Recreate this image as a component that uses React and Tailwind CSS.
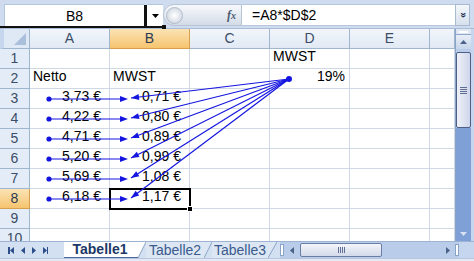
import React from "react";

const COLS = [
  { k: "A", w: 80 },
  { k: "B", w: 80 },
  { k: "C", w: 80 },
  { k: "D", w: 80 },
  { k: "E", w: 80 },
  { k: "", w: 25 },
];

const A = ["3,73 €", "4,22 €", "4,71 €", "5,20 €", "5,69 €", "6,18 €"];
const B = ["0,71 €", "0,80 €", "0,89 €", "0,99 €", "1,08 €", "1,17 €"];

function cellContent(r, c) {
  if (r === 1 && c === "D") return { t: "MWST", a: "l" };
  if (r === 2 && c === "A") return { t: "Netto", a: "l" };
  if (r === 2 && c === "B") return { t: "MWST", a: "l" };
  if (r === 2 && c === "D") return { t: "19%", a: "r" };
  if (r >= 3 && r <= 8 && c === "A") return { t: A[r - 3], a: "e" };
  if (r >= 3 && r <= 8 && c === "B") return { t: B[r - 3], a: "e" };
  return null;
}

function Arrows() {
  const blue = "#1515e0";
  const ys = [99, 119, 139, 159, 179, 199];
  const head = (x1, y1, x2, y2) => {
    const dx = x2 - x1;
    const dy = y2 - y1;
    const len = Math.hypot(dx, dy);
    const ux = dx / len;
    const uy = dy / len;
    const L = 8;
    const W = 3;
    const bx = x2 - ux * L;
    const by = y2 - uy * L;
    return `${x2},${y2} ${bx - uy * W},${by + ux * W} ${bx + uy * W},${by - ux * W}`;
  };
  return (
    <svg
      className="absolute left-0 top-0 pointer-events-none"
      width="474"
      height="261"
      viewBox="0 0 474 261"
    >
      {ys.map((y) => (
        <g key={"a" + y}>
          <circle cx="49" cy={y} r="2.6" fill={blue} />
          <line x1="49" y1={y} x2="121" y2={y} stroke={blue} strokeWidth="1.2" />
          <polygon points={head(49, y, 128, y)} fill={blue} />
        </g>
      ))}
      {ys.map((y) => (
        <g key={"d" + y}>
          <line x1="289" y1="79" x2={131} y2={y - 1} stroke={blue} strokeWidth="1.2" />
          <polygon points={head(289, 79, 131, y - 1)} fill={blue} />
        </g>
      ))}
      <circle cx="289" cy="79" r="3" fill={blue} />
    </svg>
  );
}

function Tri({ dir = "down", className = "" }) {
  const pts = {
    down: "0,0 7,0 3.5,4",
    up: "0,4 7,4 3.5,0",
    left: "4,0 4,7 0,3.5",
    right: "0,0 0,7 4,3.5",
  }[dir];
  const vb = dir === "down" || dir === "up" ? "0 0 7 4" : "0 0 4 7";
  const w = dir === "down" || dir === "up" ? 7 : 4;
  const h = dir === "down" || dir === "up" ? 4 : 7;
  return (
    <svg width={w} height={h} viewBox={vb} className={className}>
      <polygon points={pts} fill="currentColor" />
    </svg>
  );
}

export default function App() {
  const rows = [1, 2, 3, 4, 5, 6, 7, 8, 9, 10];
  return (
    <div className="relative w-[474px] h-[261px] overflow-hidden bg-[#c5d6ee] font-['Liberation_Sans',Arial,sans-serif] text-[13px] text-black flex flex-col">
      {/* Formula bar */}
      <div className="relative h-[29px] shrink-0 flex items-start pt-[4px] pl-[4px] bg-[#cfdcef] border-b border-[#a8bcd8]">
        <div className="w-[140px] h-[22px] bg-white border-t border-l border-[#b6c6dc] flex items-center justify-center text-[14px] pt-[1px]">
          B8
        </div>
        <div className="w-[3px] h-[21px] bg-[#111] mt-[1px]" />
        <div className="w-[16px] h-[22px] bg-white border-t border-[#b6c6dc] flex items-center justify-center text-black">
          <Tri dir="down" />
        </div>
        <div className="w-[79px] h-[22px] rounded-l-[11px] bg-linear-to-b from-[#f6f8fb] via-[#e6ebf2] to-[#d3dbe6] border border-[#b7c4d6] flex items-center justify-between pl-[2px] pr-[5px]">
          <div className="w-[17px] h-[17px] rounded-full bg-radial from-[#ffffff] to-[#c7d0dc] border border-[#b0bccc]" />
          <span className="font-['Liberation_Serif',serif] italic text-[12px] text-[#4b5a70] font-bold">
            f<span className="text-[10px]">x</span>
          </span>
        </div>
        <div className="w-[213px] h-[22px] bg-white border-t border-b border-[#b6c6dc] flex items-center pl-[10px] text-[14px]">
          =A8*$D$2
        </div>
        <div className="w-[15px] h-[22px] bg-linear-to-b from-[#f4f7fb] to-[#d6e0ee] border border-[#a9b9cf] flex items-center justify-center text-[#1d2f4c] text-[10px] font-bold leading-none">
          <span className="rotate-90 inline-block">»</span>
        </div>
        <div className="absolute left-0 top-[26px] w-[164px] h-[2px] bg-[#111]" />
        <div className="absolute left-[162px] top-[25px] w-[4px] h-[4px] bg-[#111]" />
      </div>

      {/* Sheet + vertical scrollbar */}
      <div className="flex h-[212px] shrink-0">
        <div className="relative w-[455px] h-[212px] bg-white overflow-hidden">
          {/* Column headers */}
          <div className="flex h-[20px]">
            <div className="w-[30px] h-[20px] bg-[#dfe8f5] border-r border-b border-[#9eb6ce] flex items-end justify-end p-[3px] pl-[4px] border-l-[4px] border-l-[#c5d6ee]">
              <svg width="12" height="12" viewBox="0 0 12 12">
                <polygon points="12,0 12,12 0,12" fill="#aabfdc" />
              </svg>
            </div>
            {COLS.map((c) => (
              <div
                key={"h" + c.k}
                style={{ width: c.w }}
                className={
                  "h-[20px] shrink-0 flex items-center justify-center border-r border-b text-[14px] " +
                  (c.k === "B"
                    ? "bg-linear-to-b from-[#fbe3b4] to-[#f5c46e] border-[#d7a04d] text-[#2b3a52]"
                    : "bg-linear-to-b from-[#f2f6fb] to-[#e1e9f4] border-[#9eb6ce] text-[#3b4d68]")
                }
              >
                {c.k}
              </div>
            ))}
          </div>
          {rows.map((r) => (
            <div key={r} className="flex h-[20px]">
              <div
                className={
                  "w-[30px] h-[20px] shrink-0 flex items-center justify-center border-r border-b text-[14px] " +
                  (r === 8
                    ? "bg-linear-to-b from-[#fbe3b4] to-[#f5c46e] border-[#d7a04d] text-[#2b3a52]"
                    : "bg-[#e4ecf7] border-[#9eb6ce] text-[#3b4d68]")
                }
              >
                {r}
              </div>
              {COLS.map((c) => {
                const v = cellContent(r, c.k);
                return (
                  <div
                    key={c.k + r}
                    style={{ width: c.w }}
                    className={
                      "h-[20px] shrink-0 flex items-end pb-[1px] border-r border-b border-[#d0d7e5] whitespace-nowrap text-[14px] " +
                      (v && v.a === "l" ? "justify-start pl-[3px]" : "") +
                      (v && v.a === "r" ? "justify-end pr-[4px]" : "") +
                      (v && v.a === "e" ? "justify-end pr-[8px]" : "")
                    }
                  >
                    {v ? v.t : null}
                  </div>
                );
              })}
            </div>
          ))}
          {/* selection outline on B8 */}
          <div className="absolute left-[109px] top-[159px] w-[82px] h-[22px] border-2 border-black pointer-events-none" />
          <div className="absolute left-[187px] top-[177px] w-[6px] h-[6px] bg-black border border-white pointer-events-none" />
        </div>
        {/* vertical scrollbar */}
        <div className="w-[16px] h-[212px] bg-[#8eaee0] flex flex-col border-l border-[#8aa4c8]">
          <div className="h-[6px] bg-[#dfe7f3] border-b border-[#8ea6c8] flex items-center justify-center">
            <div className="w-[9px] h-[2px] bg-white" />
          </div>
          <div className="h-[14px] bg-linear-to-b from-[#e8eef7] to-[#c8d6ea] flex items-center justify-center text-[#4a6287]">
            <Tri dir="up" />
          </div>
          <div className="flex-1 bg-[#b9cdea] pt-[3px] flex flex-col">
            <div className="h-[76px] mx-[0px] rounded-[2px] border border-[#4d5f86] bg-linear-to-r from-[#eef1f8] to-[#cfd6ea] flex items-center justify-center">
              <div className="flex flex-col gap-[1px]">
                <div className="w-[7px] h-[1px] bg-[#5e6f93]" />
                <div className="w-[7px] h-[1px] bg-[#5e6f93]" />
                <div className="w-[7px] h-[1px] bg-[#5e6f93]" />
                <div className="w-[7px] h-[1px] bg-[#5e6f93]" />
              </div>
            </div>
            <div className="flex-1 bg-[#7ea0d6]" />
          </div>
          <div className="h-[14px] bg-[#7ea0d6] flex items-center justify-center text-[#d8e2f2]">
            <Tri dir="down" />
          </div>
        </div>
        <div className="flex-1 bg-[#c5d6ee]" />
      </div>

      {/* Tabs + horizontal scrollbar */}
      <div className="h-[17px] shrink-0 flex items-stretch bg-[#d3e0f2] border-t border-[#9db3d3]">
        <div className="w-[64px] flex items-center gap-[7px] pl-[8px] text-[#2c4f8a]">
          <div className="flex items-center">
            <div className="w-[1.5px] h-[7px] bg-current" />
            <Tri dir="left" />
          </div>
          <Tri dir="left" />
          <Tri dir="right" />
          <div className="flex items-center">
            <Tri dir="right" />
            <div className="w-[1.5px] h-[7px] bg-current" />
          </div>
        </div>
        <div className="relative w-[74px] bg-white border-b border-[#4a6a9e] flex items-center justify-center font-bold text-[#1d3866] text-[14px] pr-[2px]">
          Tabelle1
        </div>
        <svg width="8" height="16" viewBox="0 0 8 16" className="shrink-0">
          <polygon points="0,0 0,16 8,0" fill="#ffffff" />
          <line x1="0" y1="16" x2="8" y2="0" stroke="#8aa4c8" />
        </svg>
        <div className="w-[58px] bg-[#dde7f4] flex items-center justify-center text-[#3b5b8e] text-[14px]">
          Tabelle2
        </div>
        <svg width="8" height="16" viewBox="0 0 8 16" className="shrink-0">
          <polygon points="0,0 0,16 8,0" fill="#dde7f4" />
          <line x1="0" y1="16" x2="8" y2="0" stroke="#8aa4c8" />
        </svg>
        <div className="w-[56px] bg-[#dde7f4] flex items-center justify-center text-[#3b5b8e] text-[14px]">
          Tabelle3
        </div>
        <svg width="9" height="16" viewBox="0 0 9 16" className="shrink-0">
          <polygon points="0,0 0,16 9,0" fill="#dde7f4" />
          <line x1="0" y1="16" x2="9" y2="0" stroke="#8aa4c8" />
        </svg>
        <div className="w-[3px]" />
        {/* horizontal scrollbar */}
        <div className="w-[179px] flex items-stretch bg-[#b9cdea]">
          <div className="w-[4px] my-[2px] bg-white border border-[#8aa4c8]" />
          <div className="w-[16px] flex items-center justify-center text-[#4a6287]">
            <Tri dir="left" />
          </div>
          <div className="w-[82px] my-[1px] rounded-[2px] border border-[#6a7ea6] bg-linear-to-b from-[#f3f5fa] to-[#d3dae9] flex items-center justify-center">
            <div className="flex gap-[1px]">
              <div className="w-[1px] h-[6px] bg-[#5e6f93]" />
              <div className="w-[1px] h-[6px] bg-[#5e6f93]" />
              <div className="w-[1px] h-[6px] bg-[#5e6f93]" />
              <div className="w-[1px] h-[6px] bg-[#5e6f93]" />
            </div>
          </div>
          <div className="flex-1" />
          <div className="w-[14px] flex items-center justify-center text-[#4a6287]">
            <Tri dir="right" />
          </div>
          <div className="w-[4px] my-[2px] bg-white border border-[#8aa4c8]" />
        </div>
        <div className="flex-1 bg-[#c5d6ee]" />
      </div>
      <div className="flex-1 bg-[#e3eaf4] border-t border-[#b5c6de]" />

      <Arrows />
    </div>
  );
}
